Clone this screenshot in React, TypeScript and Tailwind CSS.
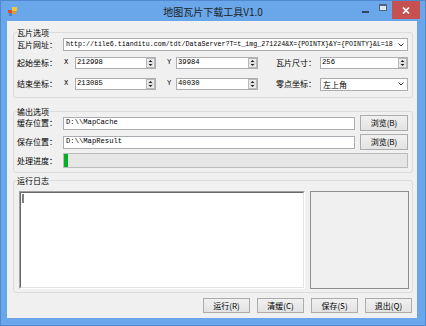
import type { ReactNode } from "react";

const cjk = "font-['Noto_Sans_CJK_SC',sans-serif]";
const mono = "font-['Liberation_Mono','Noto_Sans_CJK_SC',monospace]";

function Spin() {
  return (
    <svg width="9" height="10" viewBox="0 0 9 10" className="shrink-0">
      <rect x="0.5" y="0.5" width="8" height="9" fill="#ececec" stroke="#b9b9b9" />
      <line x1="1" y1="5" x2="8" y2="5" stroke="#d2d2d2" />
      <path d="M4.5 2 L6.5 4 L2.5 4 Z" fill="#222" />
      <path d="M2.5 6 L6.5 6 L4.5 8 Z" fill="#222" />
    </svg>
  );
}

function Chevron() {
  return (
    <svg width="6" height="4" viewBox="0 0 6 4" className="shrink-0">
      <polyline points="0.5,0.5 3,3 5.5,0.5" stroke="#333" strokeWidth="1" fill="none" />
    </svg>
  );
}

function NumBox({ w, value }: { w: string; value: string }) {
  return (
    <div className={`${w} h-[12px] bg-white border border-[#abadb3] flex items-center pl-[1px]`}>
      <span className={`${mono} text-[7.2px] leading-none flex-1 text-black`}>{value}</span>
      <Spin />
    </div>
  );
}

function Combo({ w, text, children }: { w: string; text: string; children: ReactNode }) {
  return (
    <div className={`${w} h-[13px] bg-white border border-[#acacac] flex items-center pl-[2px] pr-[3px]`}>
      <span className={`flex-1 min-w-0 leading-[11px] whitespace-nowrap overflow-hidden text-black ${text}`}>{children}</span>
      <Chevron />
    </div>
  );
}

function TextBox({ value }: { value: string }) {
  return (
    <div className="w-[292px] h-[13px] bg-white border border-[#abadb3] flex items-center pl-[2px]">
      <span className={`${mono} text-[7.2px] leading-none text-black`}>{value}</span>
    </div>
  );
}

function Btn({ w, h, children }: { w: string; h: string; children: ReactNode }) {
  return (
    <div
      className={`${w} ${h} shrink-0 border border-[#acacac] bg-linear-to-b from-[#f0f0f0] to-[#e3e3e3] flex items-center justify-center ${cjk} text-[8px] leading-none text-black`}
    >
      {children}
    </div>
  );
}

function Label({ children, w = "w-[46px]" }: { children: ReactNode; w?: string }) {
  return <span className={`${w} shrink-0 ${cjk} text-[8px] leading-none text-black`}>{children}</span>;
}

function Group({ title, className, children }: { title: string; className: string; children: ReactNode }) {
  return (
    <fieldset className={`border border-[#dcdcdc] rounded-[3px] pl-[3px] ${className}`}>
      <legend className={`${cjk} text-[8px] leading-[9px] text-black`}>{title}</legend>
      {children}
    </fieldset>
  );
}

export default function App() {
  return (
    <div className="w-[426px] h-[326px] bg-[#6aa6ea] border border-[#5088d0] flex flex-col">
      {/* title bar */}
      <div className="h-[20px] grid grid-cols-[1fr_auto_1fr]">
        <div className="flex items-center pl-[7px]">
          <svg width="9" height="9" viewBox="0 0 9 9">
            <rect x="4" y="0" width="5" height="4" fill="#f3c63a" />
            <rect x="0" y="3" width="4" height="3" fill="#e0483c" />
            <rect x="4" y="4" width="4" height="3" fill="#d99a3a" />
            <rect x="1" y="6" width="3" height="3" fill="#4f7fc9" />
          </svg>
        </div>
        <div className={`flex items-center ${cjk} text-[10px] text-[#1e1e1e]`}>地图瓦片下载工具V1.0</div>
        <div className="flex justify-end pr-[5px]">
          <div className="w-[18px] h-[18px] flex justify-center pt-[10px]">
            <div className="w-[7px] h-[2px] bg-[#34465c]" />
          </div>
          <div className="w-[18px] h-[18px] flex justify-center pt-[3px]">
            <div className="w-[8px] h-[7px] border border-t-2 border-[#52647a] bg-[#dce8f6]" />
          </div>
          <div className="w-[28px] h-[18px] bg-[#c75050] flex items-center justify-center">
            <svg width="8" height="7" viewBox="0 0 8 7">
              <path d="M1 0.5 L7 6.5 M7 0.5 L1 6.5" stroke="#fff" strokeWidth="1.7" />
            </svg>
          </div>
        </div>
      </div>

      {/* client area */}
      <div className="ml-[6px] mr-[8px] mb-[7px] flex-1 bg-[#f0f0f0] flex flex-col">
        <Group title="瓦片选项" className="ml-[6px] mt-[7px] w-[400px] pb-[7px]">
          <div className="flex items-center mt-[1px] h-[13px]">
            <Label>瓦片网址：</Label>
            <Combo w="w-[345px]" text={`${mono} text-[6.65px]`}>
              http://tile6.tianditu.com/tdt/DataServer?T=t_img_271224&amp;X={"{POINTX}"}&amp;Y={"{POINTY}"}&amp;L=18
            </Combo>
          </div>
          <div className="flex items-center mt-[6px] h-[12px]">
            <Label>起始坐标：</Label>
            <span className={`w-[12px] pl-[1px] ${mono} text-[7.2px] leading-none`}>X</span>
            <NumBox w="w-[81px]" value="212998" />
            <span className={`ml-[10px] w-[10px] pl-[1px] ${mono} text-[7.2px] leading-none`}>Y</span>
            <NumBox w="w-[82px]" value="39984" />
            <Label w="ml-[18px] w-[44px]">瓦片尺寸：</Label>
            <NumBox w="w-[88px]" value="256" />
          </div>
          <div className="flex items-center mt-[9px] h-[12px]">
            <Label>结束坐标：</Label>
            <span className={`w-[12px] pl-[1px] ${mono} text-[7.2px] leading-none`}>X</span>
            <NumBox w="w-[81px]" value="213085" />
            <span className={`ml-[10px] w-[10px] pl-[1px] ${mono} text-[7.2px] leading-none`}>Y</span>
            <NumBox w="w-[82px]" value="40030" />
            <Label w="ml-[18px] w-[44px]">零点坐标：</Label>
            <Combo w="w-[88px]" text={`${cjk} text-[8px]`}>
              左上角
            </Combo>
          </div>
        </Group>

        <Group title="输出选项" className="ml-[6px] mt-[9px] w-[400px] pb-[4px]">
          <div className="flex items-center h-[14px]">
            <Label>缓存位置：</Label>
            <TextBox value={"D:\\\\MapCache"} />
            <div className="ml-[5px]">
              <Btn w="w-[48px]" h="h-[16px]">浏览(B)</Btn>
            </div>
          </div>
          <div className="flex items-center mt-[5px] h-[14px]">
            <Label>保存位置：</Label>
            <TextBox value={"D:\\\\MapResult"} />
            <div className="ml-[5px]">
              <Btn w="w-[48px]" h="h-[16px]">浏览(B)</Btn>
            </div>
          </div>
          <div className="flex items-center mt-[4px] h-[15px]">
            <Label>处理进度：</Label>
            <div className="w-[345px] h-[15px] border border-[#bcbcbc] bg-[#e6e6e6] flex">
              <div className="w-[4px] bg-[#06b025]" />
            </div>
          </div>
        </Group>

        <Group title="运行日志" className="ml-[6px] mt-[3px] w-[400px] pb-[3px]">
          <div className="flex mt-[6px] ml-[2px] h-[98px]">
            <div className="w-[286px] h-full border border-t-[#a0a0a0] border-l-[#a0a0a0] border-b-white border-r-white">
              <div className="h-full bg-white border border-t-[#696969] border-l-[#696969] border-b-[#e3e3e3] border-r-[#e3e3e3] p-[1px]">
                <div className="w-[2px] h-[9px] bg-[#808080]" />
              </div>
            </div>
            <div className="ml-[5px] w-[99px] h-full border border-[#8e8e8e] bg-[#f0f0f0]" />
          </div>
        </Group>

        <div className="mt-[5px] flex justify-end gap-[7px] pr-[5px]">
          <Btn w="w-[47px]" h="h-[15px]">运行(R)</Btn>
          <Btn w="w-[47px]" h="h-[15px]">清缓(C)</Btn>
          <Btn w="w-[47px]" h="h-[15px]">保存(S)</Btn>
          <Btn w="w-[47px]" h="h-[15px]">退出(Q)</Btn>
        </div>
      </div>
    </div>
  );
}
